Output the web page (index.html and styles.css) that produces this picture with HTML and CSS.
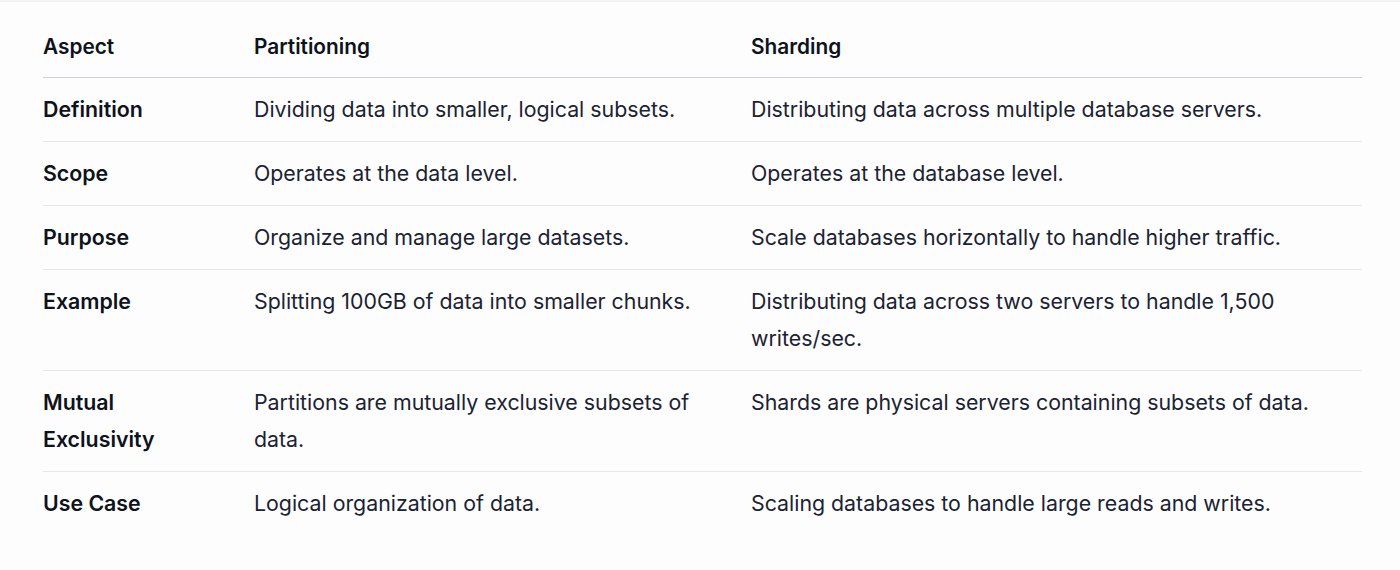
FILE: index.html
```html
<!DOCTYPE html>
<html lang="en">
<head>
<meta charset="utf-8">
<title>Partitioning vs Sharding</title>
<link rel="stylesheet" href="styles.css">
</head>
<body>
<div class="topband"></div>
<main class="wrap">
  <table class="cmp">
    <colgroup>
      <col class="c1">
      <col class="c2">
      <col class="c3">
    </colgroup>
    <thead>
      <tr><th>Aspect</th><th>Partitioning</th><th>Sharding</th></tr>
    </thead>
    <tbody>
      <tr><td class="k">Definition</td><td>Dividing data into smaller, logical subsets.</td><td>Distributing data across multiple database servers.</td></tr>
      <tr><td class="k">Scope</td><td>Operates at the data level.</td><td>Operates at the database level.</td></tr>
      <tr><td class="k">Purpose</td><td>Organize and manage large datasets.</td><td>Scale databases horizontally to handle higher traffic.</td></tr>
      <tr><td class="k">Example</td><td>Splitting 100GB of data into smaller chunks.</td><td>Distributing data across two servers to handle 1,500 writes/sec.</td></tr>
      <tr><td class="k">Mutual Exclusivity</td><td>Partitions are mutually exclusive subsets of data.</td><td>Shards are physical servers containing subsets of data.</td></tr>
      <tr><td class="k">Use Case</td><td>Logical organization of data.</td><td>Scaling databases to handle large reads and writes.</td></tr>
    </tbody>
  </table>
</main>
</body>
</html>
```
FILE: styles.css
```css
html, body {
  margin: 0;
  padding: 0;
  background: #fdfdfd;
}
body {
  font-family: Inter, "Noto Sans", sans-serif;
  color: #1b2232;
}
.topband {
  height: 2px;
  background: #f2f3f5;
}
.wrap {
  padding: 13px 0 0 43px;
}
.cmp {
  width: 1319px;
  border-collapse: collapse;
  table-layout: fixed;
  font-size: 21.33px;
  line-height: 37px;
}
.c1 { width: 211px; }
.c2 { width: 497px; }
.c3 { width: 611px; }
.cmp th, .cmp td {
  text-align: left;
  vertical-align: top;
  padding: 13px 24px 13px 0;
}
.cmp th {
  font-size: 20.8px;
  font-weight: 600;
  color: #0e121b;
  padding-bottom: 12px;
  border-bottom: 1px solid #cdd1d9;
}
.cmp td {
  border-bottom: 1px solid #e6e7eb;
}
.cmp tbody tr:last-child td {
  border-bottom: none;
}
.cmp td.k {
  font-weight: 600;
  color: #0e121b;
}
```
